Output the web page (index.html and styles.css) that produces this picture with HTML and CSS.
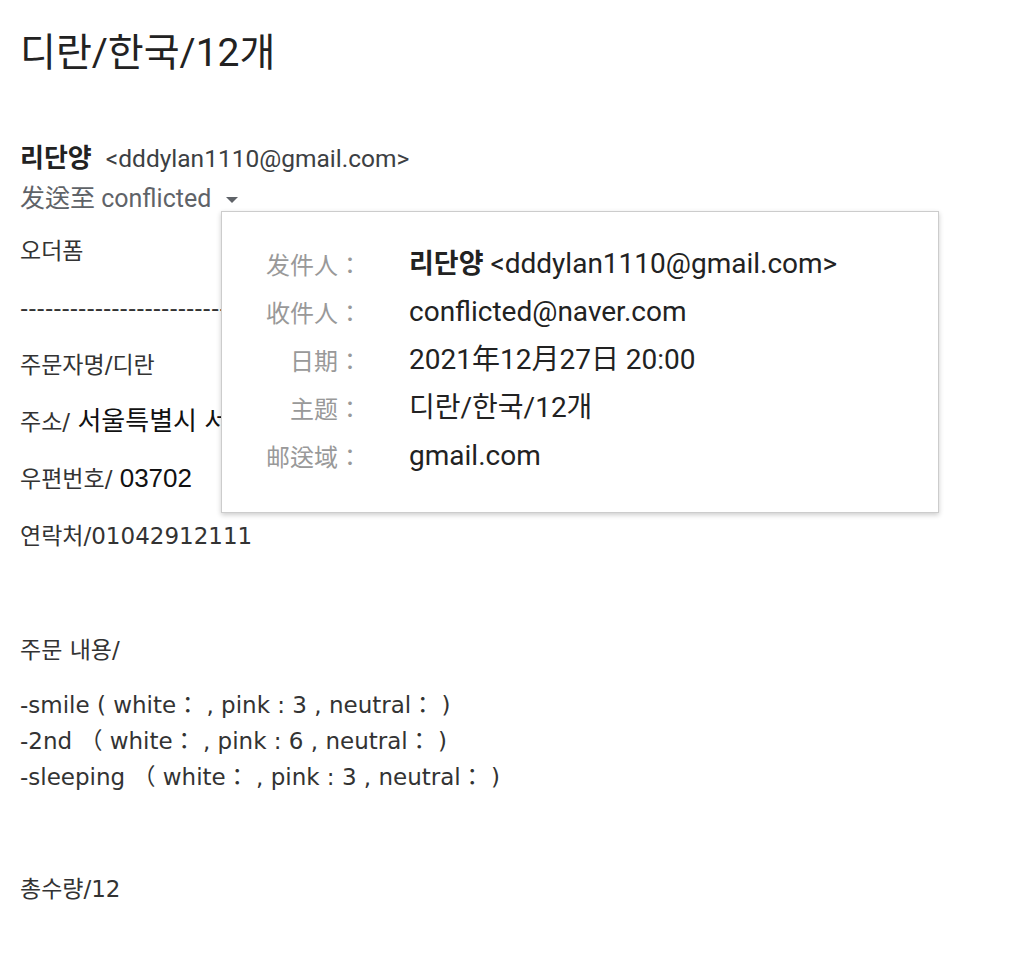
FILE: index.html
```html
<!DOCTYPE html>
<html lang="ko">
<head>
  <meta charset="UTF-8" />
  <meta name="viewport" content="width=device-width, initial-scale=1.0"/>
  <title>디란/한국/12개</title>
  <link rel="stylesheet" href="styles.css">
</head>
<body>

  <div class="mail">
    <h1 class="subject">디란/한국/12개</h1>

    <div class="from">
      <b class="name">리단양</b> <span class="addr">&lt;dddylan1110@gmail.com&gt;</span>
    </div>
    <div class="to">
      发送至 conflicted<svg class="caret" width="14" height="8" viewBox="0 0 14 8"><path d="M1 1h12L7 7z" fill="#5f6368"/></svg>
    </div>

    <div class="details">
      <div class="label">发件人：</div>
      <div class="value"><b class="name">리단양</b> <span class="addr">&lt;dddylan1110@gmail.com&gt;</span></div>
      <div class="label">收件人：</div>
      <div class="value">conflicted@naver.com</div>
      <div class="label">日期：</div>
      <div class="value">2021年12月27日 20:00</div>
      <div class="label">主题：</div>
      <div class="value">디란/한국/12개</div>
      <div class="label">邮送域：</div>
      <div class="value">gmail.com</div>
    </div>

    <div class="body">
      <p>오더폼</p>
      <p>----------------------------------------------</p>
      <p>주문자명/디란</p>
      <p>주소/ <span class="strong">서울특별시 서대문구</span></p>
      <p>우편번호/ <span class="strong">03702</span></p>
      <p>연락처/01042912111</p>
      <p class="blank"><br></p>
      <p>주문 내용/</p>
      <div class="items">
        <div>-smile ( white： , pink : 3 , neutral： )</div>
        <div>-2nd （ white： , pink : 6 , neutral： )</div>
        <div>-sleeping （ white： , pink : 3 , neutral： )</div>
      </div>
      <p class="blank"><br></p>
      <p>총수량/12</p>
    </div>
  </div>

</body>
</html>
```

FILE: styles.css
```css
:root {
  --ink: #222;
  --soft: #5f6368;
  --label: #999;
}

body {
  margin: 0;
  background: #fff;
  color: var(--ink);
  font-family: Roboto, "Noto Sans CJK KR", sans-serif;
}

.mail {
  position: relative;
  padding: 0 20px;
}

h1.subject {
  margin: 0;
  padding-top: 26px;
  font-size: 39px;
  font-weight: 400;
  line-height: 54px;
}

.from {
  margin-top: 63px;
  font-size: 24.5px;
  line-height: 30px;
}

.from .name {
  font-size: 26px;
  font-weight: 700;
  margin-right: 8px;
}

.addr {
  color: #3c4043;
}

.to {
  color: var(--soft);
  font-size: 25px;
  line-height: 30px;
  margin-top: 10px;
}

.caret {
  margin-left: 14px;
  vertical-align: middle;
}

/* sender details popup */
.details {
  position: absolute;
  top: 211px;
  left: 221px;
  width: 718px;
  height: 302px;
  box-sizing: border-box;
  padding: 28px 0 0 43px;
  background: #fff;
  border: 1px solid #ccc;
  box-shadow: 0 2px 5px rgba(0, 0, 0, 0.2);
  display: grid;
  grid-template-columns: 97px 1fr;
  grid-auto-rows: 48px;
  column-gap: 47px;
  align-content: start;
  line-height: 48px;
}

.details .label {
  color: var(--label);
  text-align: right;
  font-size: 24px;
  font-family: "Noto Sans CJK SC", sans-serif;
}

.details .value {
  color: var(--ink);
  font-size: 28px;
  white-space: nowrap;
}

.details .name {
  font-size: 27px;
  font-weight: 700;
}

.details .addr {
  color: var(--ink);
}

.body {
  margin-top: 19px;
  font-family: "DejaVu Sans", "Noto Sans CJK KR", sans-serif;
  font-size: 23px;
  color: #333;
}

.body p {
  margin: 0 0 21px;
  line-height: 36px;
}

.body .strong {
  color: #111;
  font-family: "Liberation Sans", "Noto Sans CJK KR", sans-serif;
  font-size: 26px;
  line-height: 1;
}

.items {
  line-height: 36px;
  margin: -2px 0 19px;
}
```
